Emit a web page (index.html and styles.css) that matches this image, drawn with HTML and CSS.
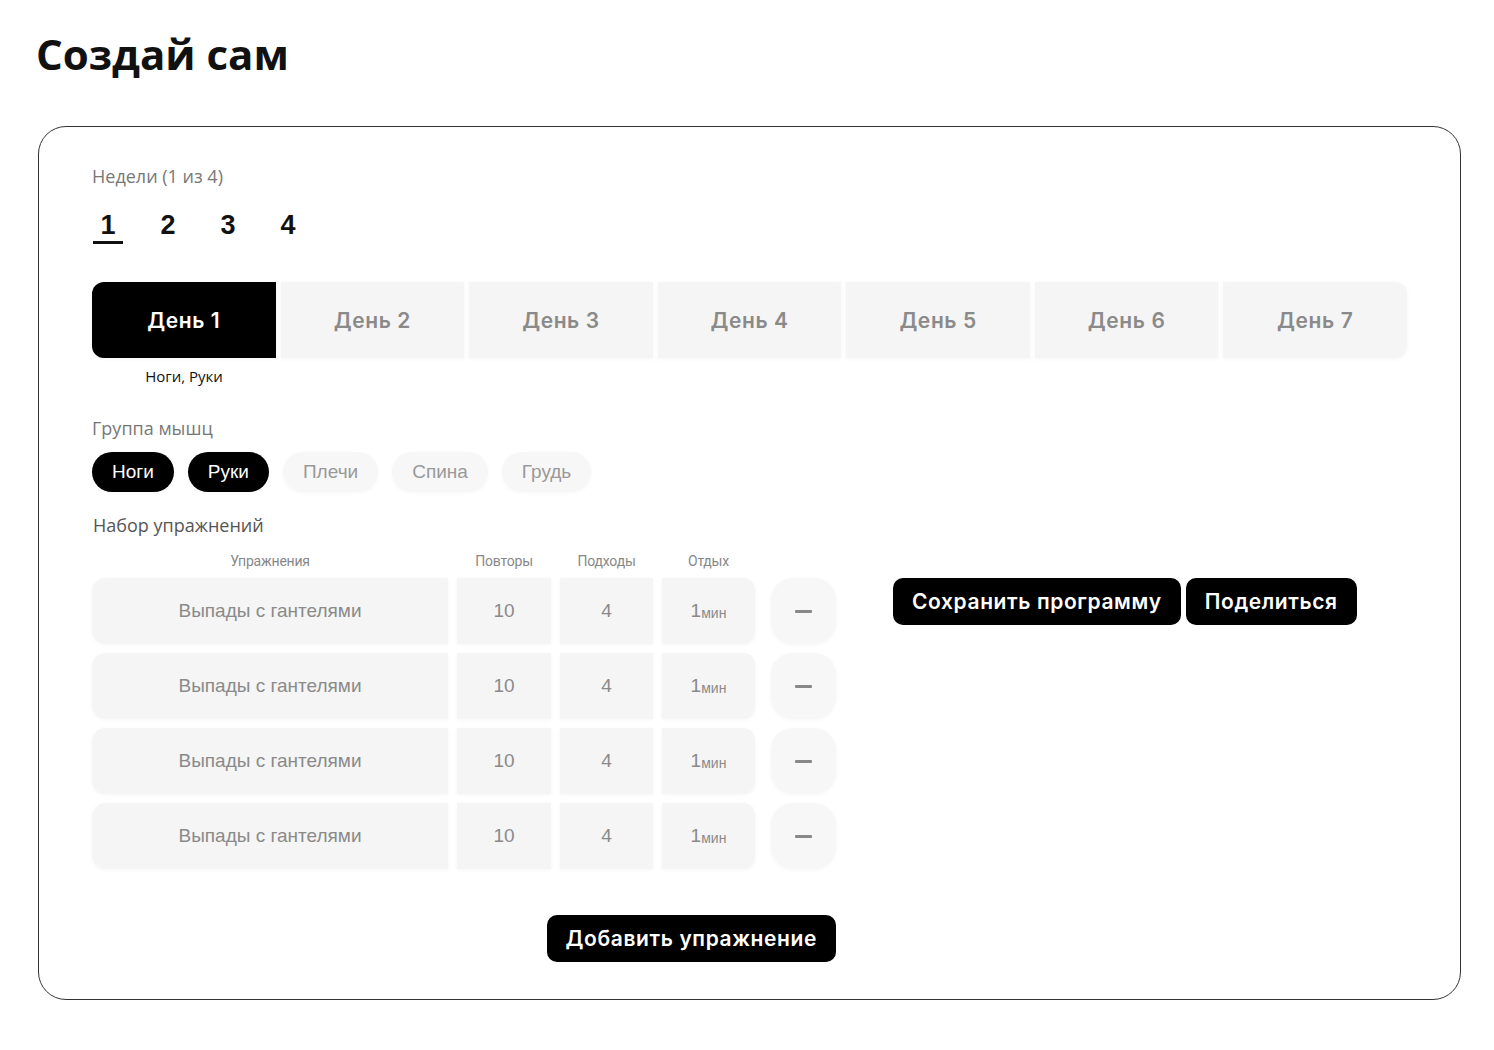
FILE: index.html
```html
<!DOCTYPE html>
<html lang="ru">
<head>
  <meta charset="UTF-8">
  <meta name="viewport" content="width=device-width, initial-scale=1.0">
  <title>Создай сам</title>
  <link rel="stylesheet" href="styles.css">
</head>
<body>
  <h1 class="page-title">Создай сам</h1>

  <div class="builder">
    <p class="label">Недели (1 из 4)</p>
    <div class="weeks">
      <span class="week active">1</span>
      <span class="week">2</span>
      <span class="week">3</span>
      <span class="week">4</span>
    </div>

    <div class="days">
      <div class="day active">День 1</div>
      <div class="day">День 2</div>
      <div class="day">День 3</div>
      <div class="day">День 4</div>
      <div class="day">День 5</div>
      <div class="day">День 6</div>
      <div class="day">День 7</div>
    </div>
    <div class="day-notes">
      <span>Ноги, Руки</span>
    </div>

    <p class="label muscles-label">Группа мышц</p>
    <div class="chips">
      <span class="chip active">Ноги</span>
      <span class="chip active">Руки</span>
      <span class="chip">Плечи</span>
      <span class="chip">Спина</span>
      <span class="chip">Грудь</span>
    </div>

    <p class="label set-label">Набор упражнений</p>
    <div class="workout">
      <div class="exercises">
        <div class="ex-row ex-head">
          <span>Упражнения</span>
          <span>Повторы</span>
          <span>Подходы</span>
          <span>Отдых</span>
        </div>
        <div class="ex-row">
          <div class="cell name">Выпады с гантелями</div>
          <div class="cell">10</div>
          <div class="cell">4</div>
          <div class="cell">1<small>мин</small></div>
          <div class="remove"><i></i></div>
        </div>
        <div class="ex-row">
          <div class="cell name">Выпады с гантелями</div>
          <div class="cell">10</div>
          <div class="cell">4</div>
          <div class="cell">1<small>мин</small></div>
          <div class="remove"><i></i></div>
        </div>
        <div class="ex-row">
          <div class="cell name">Выпады с гантелями</div>
          <div class="cell">10</div>
          <div class="cell">4</div>
          <div class="cell">1<small>мин</small></div>
          <div class="remove"><i></i></div>
        </div>
        <div class="ex-row">
          <div class="cell name">Выпады с гантелями</div>
          <div class="cell">10</div>
          <div class="cell">4</div>
          <div class="cell">1<small>мин</small></div>
          <div class="remove"><i></i></div>
        </div>
        <div class="add-row">
          <button class="btn">Добавить упражнение</button>
        </div>
      </div>
      <div class="actions">
        <button class="btn">Сохранить программу</button>
        <button class="btn">Поделиться</button>
      </div>
    </div>
  </div>
</body>
</html>
```

FILE: styles.css
```css
body {
  margin: 0;
  padding: 0 33px 40px 38px;
  font-family: 'Open Sans', Arial, sans-serif;
  background-color: #fff;
  color: #111;
}

.page-title {
  margin: 0 0 0 -2px;
  padding-top: 24px;
  font-size: 42px;
  line-height: 60px;
  font-weight: 700;
  color: #111;
}

.builder {
  margin-top: 42px;
  border: 1px solid #333;
  border-radius: 28px;
  padding: 37px 53px 37px;
}

.label {
  margin: 0;
  font-size: 18px;
  line-height: 24px;
  color: #777;
}

.weeks {
  display: flex;
  gap: 30px;
  margin-top: 22px;
  padding-left: 1px;
}

.week {
  width: 30px;
  text-align: center;
  font-family: 'Liberation Sans', Arial, sans-serif;
  font-size: 27px;
  font-weight: 700;
  line-height: 31px;
  padding-bottom: 3px;
  color: #111;
}

.week.active {
  border-bottom: 3px solid #111;
  padding-bottom: 0;
}

.days {
  display: flex;
  gap: 5px;
  margin-top: 38px;
}

.day {
  flex: 1;
  height: 76px;
  display: flex;
  justify-content: center;
  align-items: center;
  background-color: #f5f5f5;
  box-shadow: 0 1px 4px rgba(0, 0, 0, 0.04);
  font-family: 'Inter', 'Noto Sans', sans-serif;
  font-size: 21px;
  font-weight: 600;
  letter-spacing: 0.6px;
  color: #8a8a8a;
}

.day:first-child {
  border-radius: 12px 0 0 12px;
}

.day:last-child {
  border-radius: 0 12px 12px 0;
}

.day.active {
  background-color: #000;
  color: #fff;
}

.day-notes {
  width: 184px;
  margin-top: 8px;
  text-align: center;
  font-size: 15px;
  line-height: 20px;
  color: #111;
}

.muscles-label {
  margin-top: 30px;
}

.chips {
  display: flex;
  gap: 14px;
  margin-top: 12px;
}

.chip {
  height: 40px;
  padding: 0 20px;
  display: flex;
  align-items: center;
  border-radius: 20px;
  background-color: #f7f7f7;
  box-shadow: 0 1px 4px rgba(0, 0, 0, 0.03);
  font-family: 'Liberation Sans', Arial, sans-serif;
  font-size: 19px;
  color: #999;
}

.chip.active {
  background-color: #000;
  color: #fff;
}

.set-label {
  margin-top: 21px;
  padding-left: 1px;
  color: #555;
}

.workout {
  display: flex;
  align-items: flex-start;
  gap: 57px;
  margin-top: 15px;
}

.exercises {
  display: flex;
  flex-direction: column;
  gap: 9px;
}

.ex-row {
  display: grid;
  grid-template-columns: 356px 94px 93px 93px 72px;
  column-gap: 9px;
}

.ex-head {
  height: 17px;
  align-items: center;
  font-family: 'Roboto', Arial, sans-serif;
  font-size: 14px;
  color: #888;
  letter-spacing: -0.2px;
  text-align: center;
}

.cell {
  height: 66px;
  display: flex;
  justify-content: center;
  align-items: center;
  background-color: #f5f5f5;
  box-shadow: 0 1px 4px rgba(0, 0, 0, 0.04);
  font-family: 'Liberation Sans', Arial, sans-serif;
  font-size: 19px;
  color: #8a8a8a;
}

.cell.name {
  border-radius: 14px 0 0 14px;
}

.cell:nth-child(4) {
  border-radius: 0 12px 12px 0;
}

.cell small {
  font-size: 14px;
  margin-top: 3px;
}

.remove {
  justify-self: end;
  width: 65px;
  height: 66px;
  border-radius: 22px;
  background-color: #f7f7f7;
  box-shadow: 0 1px 4px rgba(0, 0, 0, 0.04);
  display: flex;
  justify-content: center;
  align-items: center;
}

.remove i {
  width: 17px;
  height: 3px;
  border-radius: 1px;
  background-color: #888;
}

.add-row {
  display: flex;
  justify-content: flex-end;
  margin-top: 37px;
}

.btn {
  height: 47px;
  padding: 0 19px;
  border: none;
  border-radius: 10px;
  background-color: #000;
  color: #fff;
  font-family: 'Inter', 'Noto Sans', sans-serif;
  font-size: 21px;
  font-weight: 600;
  letter-spacing: 0.6px;
  cursor: pointer;
}

.actions {
  display: flex;
  gap: 5px;
  margin-top: 26px;
}
```
